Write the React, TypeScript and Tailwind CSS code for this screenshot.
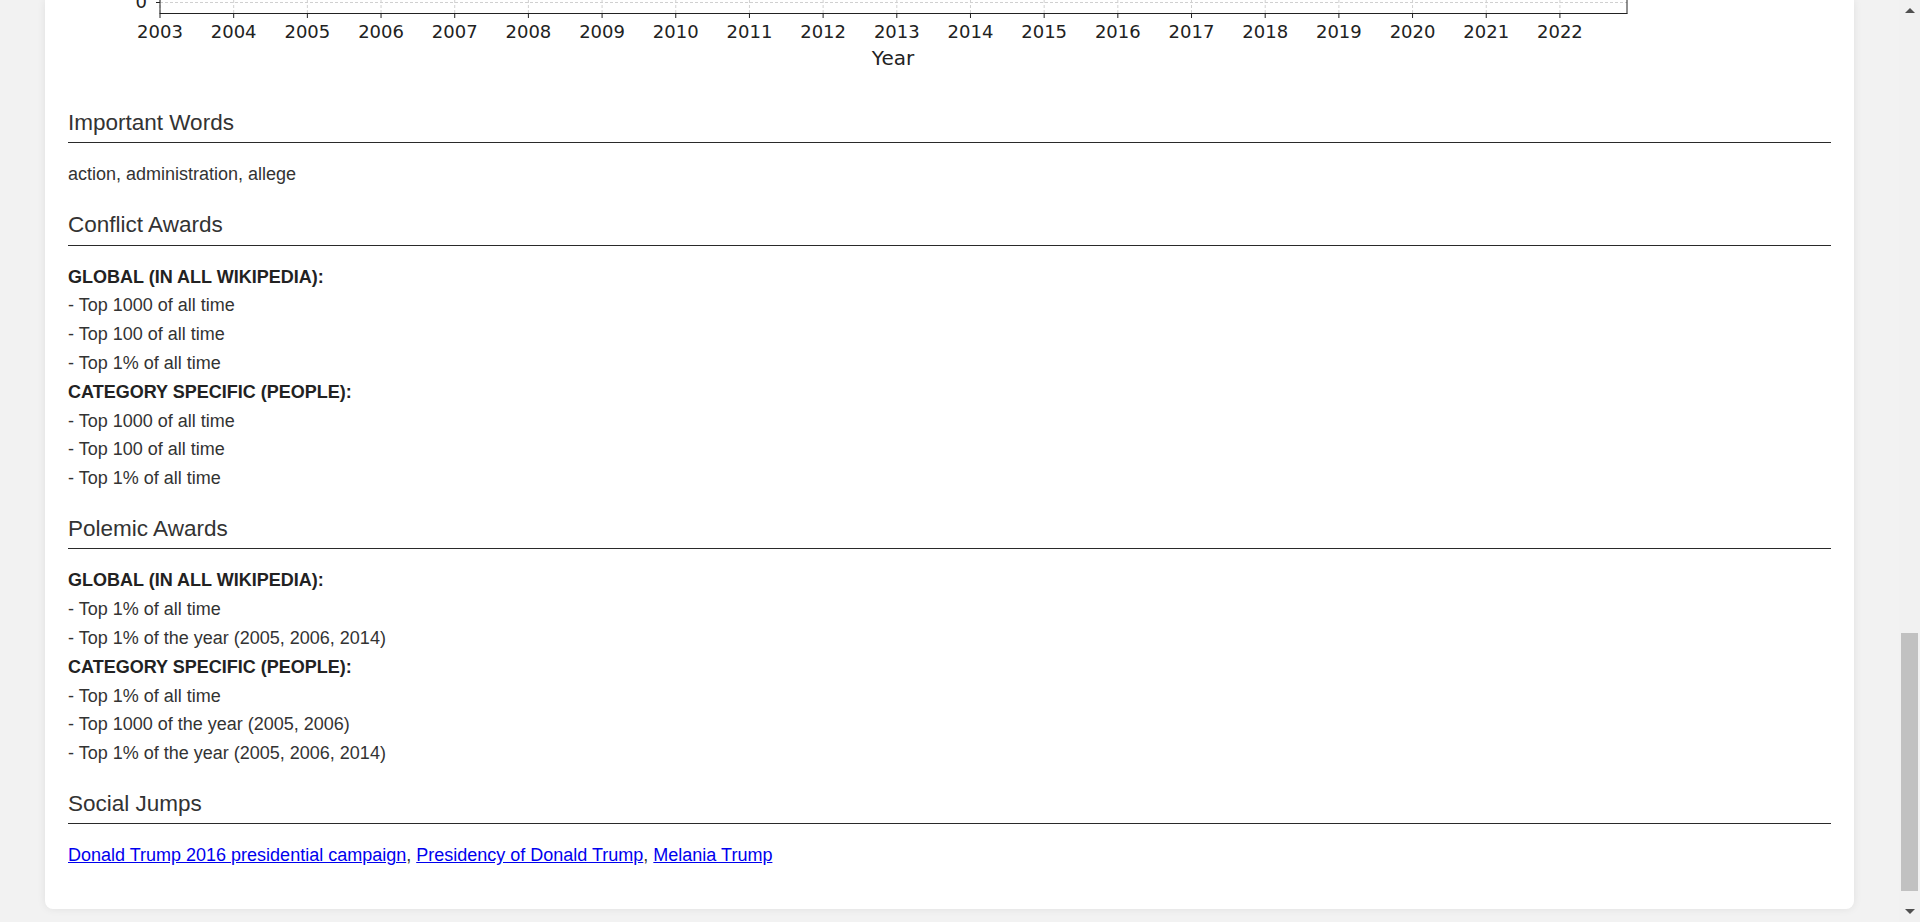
// Article detail page, scrolled to the bottom: chart tail + awards sections

const YEARS = Array.from({ length: 20 }, (_, i) => 2003 + i);

const X0 = 92; // x of 2003 inside the chart
const STEP = 73.68;
const X_RIGHT = 1559;
const AXIS_Y = 13.5;

function ChartTail() {
  return (
    <svg width="1763" height="72" className="block">
      {/* grid */}
      <line x1={X0} y1={2.5} x2={X_RIGHT} y2={2.5} stroke="#d0d0d0" strokeDasharray="3 2" />
      {YEARS.map((y, i) => (
        <line
          key={`g${y}`}
          x1={X0 + i * STEP}
          y1={0}
          x2={X0 + i * STEP}
          y2={AXIS_Y}
          stroke="#d0d0d0"
          strokeDasharray="3 2"
        />
      ))}
      {/* spines */}
      <line x1={X0} y1={0} x2={X0} y2={AXIS_Y} stroke="#222" />
      <line x1={X_RIGHT} y1={0} x2={X_RIGHT} y2={AXIS_Y} stroke="#222" />
      <line x1={X0 - 0.5} y1={AXIS_Y} x2={X_RIGHT + 0.5} y2={AXIS_Y} stroke="#222" />
      {/* y tick */}
      <line x1={X0 - 4} y1={2.5} x2={X0} y2={2.5} stroke="#222" />
      <text x={79} y={8} textAnchor="end" fontSize="18" fill="#222" fontFamily="'DejaVu Sans', sans-serif">
        0
      </text>
      {/* x ticks + labels */}
      {YEARS.map((y, i) => (
        <g key={y}>
          <line x1={X0 + i * STEP} y1={AXIS_Y} x2={X0 + i * STEP} y2={18} stroke="#222" />
          <text
            x={X0 + i * STEP}
            y={37.5}
            textAnchor="middle"
            fontSize="18"
            fill="#222"
            fontFamily="'DejaVu Sans', sans-serif"
          >
            {y}
          </text>
        </g>
      ))}
      <text x={825} y={64.5} textAnchor="middle" fontSize="20" fill="#222" fontFamily="'DejaVu Sans', sans-serif">
        Year
      </text>
    </svg>
  );
}

function Section({ title, first, children }: { title: string; first?: boolean; children: React.ReactNode }) {
  return (
    <div className={first ? 'mt-[38px]' : 'mt-[23px]'}>
      <h3 className="text-[22.5px] leading-[26.4px] pb-[6px] border-b border-[#2a2a2a] text-[#333] font-normal">
        {title}
      </h3>
      <div className="mt-[17px]">{children}</div>
    </div>
  );
}

function AwardList({ groups }: { groups: { label: string; items: string[] }[] }) {
  return (
    <div>
      {groups.map((g) => (
        <div key={g.label}>
          <div className="font-bold text-[#222]">{g.label}</div>
          {g.items.map((item, i) => (
            <div key={i}>- {item}</div>
          ))}
        </div>
      ))}
    </div>
  );
}

function Scrollbar() {
  return (
    <div className="w-[21px] h-full bg-[#f1f1f1] flex flex-col items-center">
      <div className="h-[21px] w-full flex items-center justify-center">
        <div className="w-0 h-0 border-l-[5px] border-r-[5px] border-b-[5px] border-l-transparent border-r-transparent border-b-[#505050]" />
      </div>
      <div className="flex-1 w-full flex flex-col px-[2px]">
        <div className="h-[612px]" />
        <div className="h-[258px] w-full bg-[#c1c1c1]" />
      </div>
      <div className="h-[21px] w-full flex items-center justify-center">
        <div className="w-0 h-0 border-l-[5px] border-r-[5px] border-t-[5px] border-l-transparent border-r-transparent border-t-[#505050]" />
      </div>
    </div>
  );
}

export default function App() {
  const links = ['Donald Trump 2016 presidential campaign', 'Presidency of Donald Trump', 'Melania Trump'];

  return (
    <div className="h-[922px] w-[1920px] overflow-hidden flex bg-[#f2f2f2] font-['Liberation_Sans',Arial,sans-serif] text-[18px] leading-[28.8px] text-[#333]">
      <div className="flex-1">
        <div className="mx-[45px] bg-white rounded-b-lg shadow-[0_0_8px_rgba(0,0,0,0.08)] px-[23px] pb-[39px]">
          <ChartTail />

          <Section title="Important Words" first>
            <p>action, administration, allege</p>
          </Section>

          <Section title="Conflict Awards">
            <AwardList
              groups={[
                {
                  label: 'GLOBAL (IN ALL WIKIPEDIA):',
                  items: ['Top 1000 of all time', 'Top 100 of all time', 'Top 1% of all time'],
                },
                {
                  label: 'CATEGORY SPECIFIC (PEOPLE):',
                  items: ['Top 1000 of all time', 'Top 100 of all time', 'Top 1% of all time'],
                },
              ]}
            />
          </Section>

          <Section title="Polemic Awards">
            <AwardList
              groups={[
                {
                  label: 'GLOBAL (IN ALL WIKIPEDIA):',
                  items: ['Top 1% of all time', 'Top 1% of the year (2005, 2006, 2014)'],
                },
                {
                  label: 'CATEGORY SPECIFIC (PEOPLE):',
                  items: [
                    'Top 1% of all time',
                    'Top 1000 of the year (2005, 2006)',
                    'Top 1% of the year (2005, 2006, 2014)',
                  ],
                },
              ]}
            />
          </Section>

          <Section title="Social Jumps">
            <p>
              {links.map((l, i) => (
                <span key={l}>
                  <a href="#" className="text-[#0000ee] underline">
                    {l}
                  </a>
                  {i < links.length - 1 && ', '}
                </span>
              ))}
            </p>
          </Section>
        </div>
      </div>
      <Scrollbar />
    </div>
  );
}
